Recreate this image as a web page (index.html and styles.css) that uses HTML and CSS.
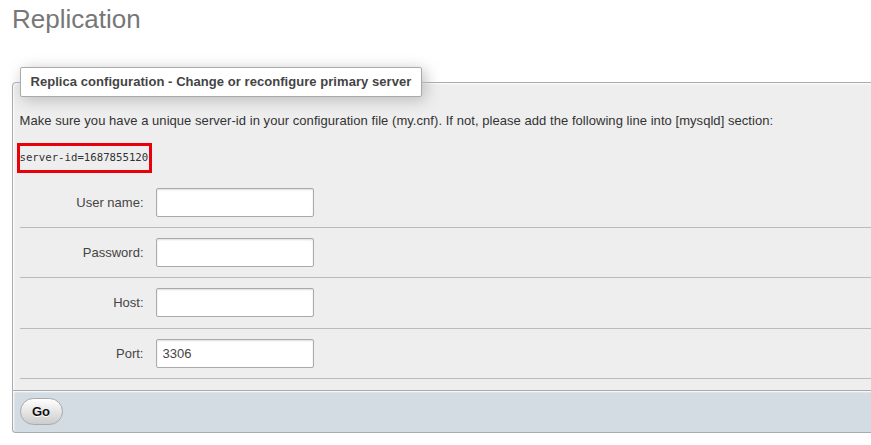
FILE: index.html
```html
<!DOCTYPE html>
<html lang="en">
<head>
<meta charset="utf-8">
<title>Replication</title>
<link rel="stylesheet" href="styles.css">
</head>
<body>
<div class="page">
  <h2 class="title">Replication</h2>
  <form class="form">
    <fieldset class="panel">
      <legend class="panel-legend">Replica configuration - Change or reconfigure primary server</legend>
      <p class="note">Make sure you have a unique server-id in your configuration file (my.cnf). If not, please add the following line into [mysqld] section:</p>
      <code class="server-id">server-id=1687855120</code>
      <div class="row">
        <label class="row-label" for="username">User name:</label>
        <input class="field" id="username" type="text">
      </div>
      <div class="row">
        <label class="row-label" for="password">Password:</label>
        <input class="field" id="password" type="password">
      </div>
      <div class="row">
        <label class="row-label" for="host">Host:</label>
        <input class="field" id="host" type="text">
      </div>
      <div class="row">
        <label class="row-label" for="port">Port:</label>
        <input class="field" id="port" type="text" value="3306">
      </div>
    </fieldset>
    <fieldset class="panel-footer">
      <button class="btn" type="button">Go</button>
    </fieldset>
  </form>
</div>
</body>
</html>
```

FILE: styles.css
```css
html, body {
  margin: 0;
  padding: 0;
  background: #fff;
}

body {
  font-family: "Liberation Sans", Arial, sans-serif;
  font-size: 13px;
  color: #444;
}

.page {
  padding: 4px 0 0 12px;
  overflow: hidden;
}

.title {
  margin: 0;
  font-size: 26px;
  line-height: 30px;
  font-weight: normal;
  color: #777;
}

.form {
  margin: 33px -30px 0 0;
}

.panel {
  margin: 0;
  border: 1px solid #aaa;
  border-radius: 4px 4px 0 0;
  background: #eee;
  padding: 6px 6px 11px 6.5px;
  box-shadow: inset 1px 1px 2px #fff;
}

.panel-legend {
  font-weight: bold;
  color: #444;
  background: #fff;
  border: 1px solid #aaa;
  border-radius: 2px;
  padding: 5px 10px;
  line-height: 18px;
  letter-spacing: 0.05px;
  box-shadow: 3px 3px 15px #bbb;
}

.note {
  margin: 9px 0 0 0;
  line-height: 18px;
  letter-spacing: 0.05px;
  color: #333;
}

.server-id {
  display: block;
  width: fit-content;
  margin: 13px 0 0 -3px;
  border: 3px solid #e8000b;
  padding: 5px 1px 5px 0;
  font-family: "DejaVu Sans Mono", "Liberation Mono", monospace;
  font-size: 10.7px;
  line-height: 14px;
  color: #333;
}

.row {
  box-sizing: border-box;
  height: 50.4px;
  display: flex;
  align-items: center;
  border-bottom: 1px solid #bbb;
}

.server-id + .row {
  margin-top: 4.5px;
}

.row-label {
  width: 124px;
  margin-right: 12px;
  text-align: right;
  color: #444;
}

.field {
  box-sizing: border-box;
  width: 158px;
  height: 29px;
  margin: 0;
  padding: 0 6px;
  border: 1px solid #aaa;
  border-radius: 2px;
  background: #fff;
  box-shadow: inset 0 1px 2px #ddd;
  font-family: "Liberation Sans", Arial, sans-serif;
  font-size: 13px;
  color: #444;
}

.panel-footer {
  margin: 0;
  border: 1px solid #aaa;
  border-top: 0;
  border-radius: 0 0 4px 4px;
  background: #d3dce3;
  padding: 7px 6px 7px 6.5px;
  box-shadow: inset 1px 1px 2px #fff;
}

.btn {
  box-sizing: border-box;
  width: 43px;
  height: 27px;
  margin: 0;
  padding: 0;
  border: 1px solid #aaa;
  border-radius: 14px;
  background: linear-gradient(#fff, #ccc);
  font-family: "Liberation Sans", Arial, sans-serif;
  font-size: 13px;
  font-weight: bold;
  color: #111;
  text-shadow: 0 1px 0 #fff;
}
```
